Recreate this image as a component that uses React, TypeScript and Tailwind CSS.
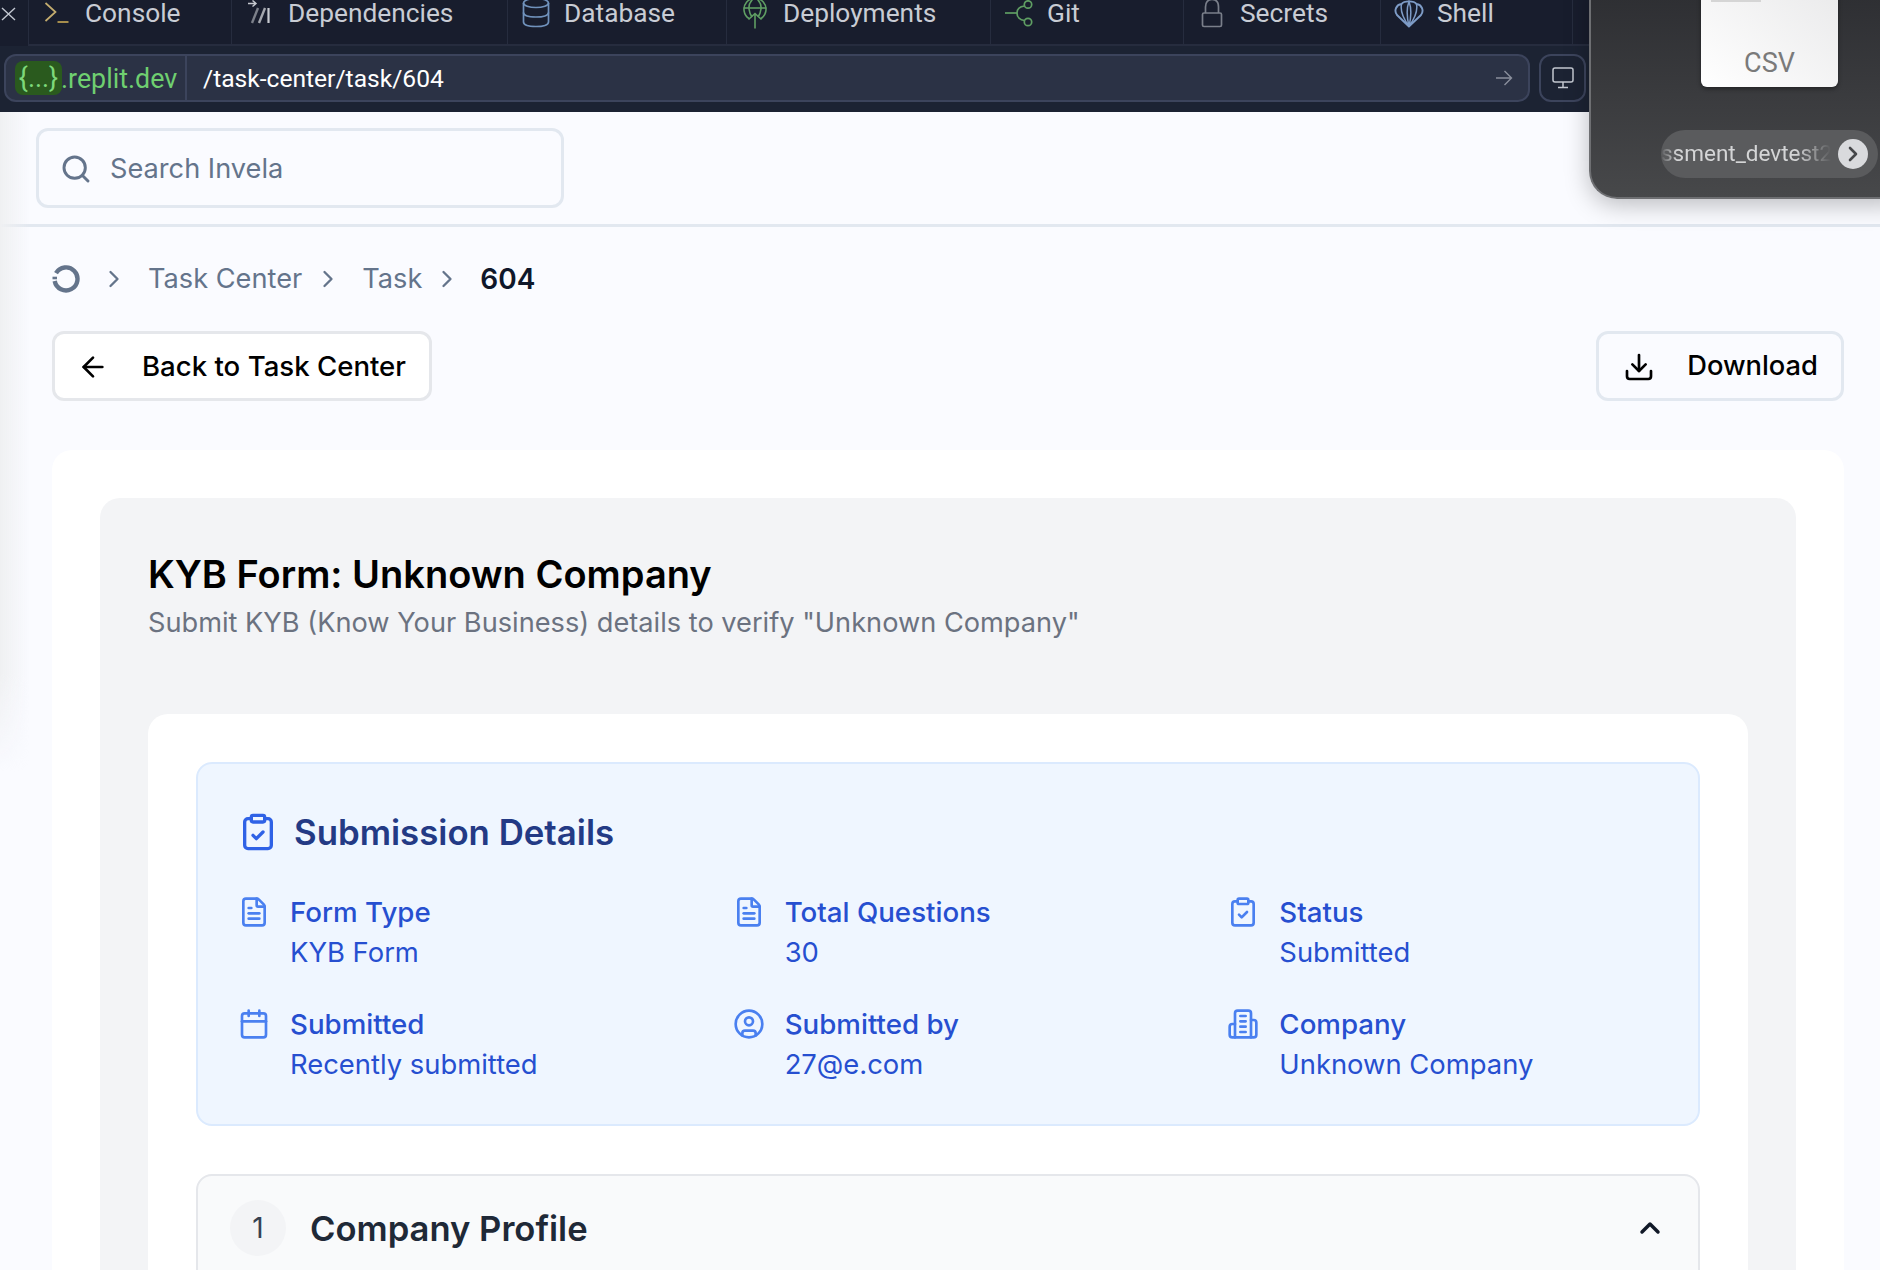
import { ArrowLeft, Calendar, ChevronRight, ChevronUp, CircleUser, ClipboardCheck, Download, FileText, Search } from "lucide-react";
import type { ReactNode } from "react";

const ConsoleIcon = () => (
  <svg width="30" height="44" viewBox="0 0 30 44" fill="none">
    <path d="M3.5 3 13.5 12 3.5 21" stroke="#c4ad6f" strokeWidth="1.7" />
    <path d="M15.5 22H26.5" stroke="#a58d4c" strokeWidth="2" />
  </svg>
);

const DepsIcon = () => (
  <svg width="30" height="44" viewBox="0 0 30 44" fill="none">
    <path d="M3 3.5H10.5M7.5 0.5 11 3.5 7.5 6.5" stroke="#c5c8cf" strokeWidth="1.4" />
    <path d="M7 23 13 8" stroke="#7c808a" strokeWidth="2.4" />
    <path d="M14 23 20 8" stroke="#a4a7ae" strokeWidth="2.4" />
    <path d="M23.5 8V23" stroke="#c8cbd1" strokeWidth="2.2" />
  </svg>
);

const DatabaseIcon = () => (
  <svg width="30" height="44" viewBox="0 0 30 44" fill="none" stroke="#7092bc" strokeWidth="1.7">
    <ellipse cx="15" cy="3" rx="12.5" ry="4.5" />
    <path d="M2.5 3V22C2.5 25 8 26.5 15 26.5S27.5 25 27.5 22V3" />
    <path d="M2.5 12.5C2.5 15.5 8 17 15 17S27.5 15.5 27.5 12.5" />
  </svg>
);

const DeployIcon = () => (
  <svg width="30" height="44" viewBox="0 0 30 44" fill="none" stroke="#5f9e63" strokeWidth="1.6">
    <path d="M9 18.5A11 11 0 1 1 21 18.5" />
    <path d="M3.5 8H26.5" />
    <path d="M15 -3C10 1 8.5 5 9 9 9.5 13 10.5 15 12 17" />
    <path d="M15 -3C20 1 21.5 5 21 9 20.5 13 19.5 15 18 17" />
    <path d="M15 28.5V13.5M8.5 19.5 15 13.5 21.5 19.5" />
  </svg>
);

const GitIcon = () => (
  <svg width="30" height="44" viewBox="0 0 30 44" fill="none" stroke="#5f9e63" strokeWidth="1.7">
    <circle cx="24" cy="4.5" r="3.7" />
    <circle cx="24" cy="22" r="3.7" />
    <path d="M1 13H13" />
    <path d="M20.5 6C16 6.5 13 9 13 13 13 17 16 20 20.5 20.5" />
  </svg>
);

const LockIcon = () => (
  <svg width="30" height="44" viewBox="0 0 30 44" fill="none" stroke="#7a7f8a" strokeWidth="1.7">
    <rect x="5.5" y="13" width="19" height="13.5" rx="1.5" />
    <path d="M8.5 13V7C8.5 2 11 -0.5 15 -0.5S21.5 2 21.5 7V13" />
  </svg>
);

const ShellIcon = () => (
  <svg width="30" height="44" viewBox="0 0 30 44" fill="none" stroke="#7e9cc7" strokeWidth="1.9">
    <path d="M15 26.5 3 15C-0.5 10.5 2.5 4.5 7.5 4 10 0.5 20 0.5 22.5 4 27.5 4.5 30.5 10.5 27 15Z" />
    <path d="M15 26.5C9 18 6 11 7.5 4M15 26.5C21 18 24 11 22.5 4M15 26.5C12.5 16 12.5 8 15 1.5 17.5 8 17.5 16 15 26.5Z" strokeWidth="1.5" />
  </svg>
);

const InvelaLogo = () => (
  <svg width="28" height="28" viewBox="0 0 28 28" fill="none">
    <path d="M4 8.2A11.5 11.5 0 1 1 2.7 16" stroke="#64748b" strokeWidth="4.4" />
    <path d="M0.5 13H5" stroke="#64748b" strokeWidth="2.6" />
  </svg>
);

const CompanyIcon = ({ size, color, className }: { size?: number; color?: string; className?: string }) => (
  <svg width={size} height={size} viewBox="0 0 24 24" fill="none" stroke={color} strokeWidth="2" strokeLinecap="round" strokeLinejoin="round" className={className}>
    <path d="M6 22V4a2 2 0 0 1 2-2h8a2 2 0 0 1 2 2v18Z" />
    <path d="M6 12H4a2 2 0 0 0-2 2v6a2 2 0 0 0 2 2h2" />
    <path d="M18 9h2a2 2 0 0 1 2 2v9a2 2 0 0 1-2 2h-2" />
    <path d="M10 6h4M10 10h4M10 14h4M10 18h4" />
  </svg>
);

const tabs: { label: string; width: string; icon: ReactNode }[] = [
  { label: "Console", width: "w-[203px]", icon: <ConsoleIcon /> },
  { label: "Dependencies", width: "w-[276px]", icon: <DepsIcon /> },
  { label: "Database", width: "w-[219px]", icon: <DatabaseIcon /> },
  { label: "Deployments", width: "w-[264px]", icon: <DeployIcon /> },
  { label: "Git", width: "w-[193px]", icon: <GitIcon /> },
  { label: "Secrets", width: "w-[197px]", icon: <LockIcon /> },
  { label: "Shell", width: "w-[193px]", icon: <ShellIcon /> },
];

const details = [
  { label: "Form Type", value: "KYB Form", Icon: FileText },
  { label: "Total Questions", value: "30", Icon: FileText },
  { label: "Status", value: "Submitted", Icon: ClipboardCheck },
  { label: "Submitted", value: "Recently submitted", Icon: Calendar },
  { label: "Submitted by", value: "27@e.com", Icon: CircleUser },
  { label: "Company", value: "Unknown Company", Icon: CompanyIcon },
];

function TopBar() {
  return (
    <div className="w-[1589px] h-[112px] bg-[#181d2d] font-['Roboto',sans-serif]">
      <div className="flex h-[46px] overflow-hidden">
        <div className="w-[28px] h-[44px] shrink-0">
          <svg width="28" height="44" viewBox="0 0 28 44" fill="none" stroke="#c2c7d0" strokeWidth="1.4">
            <path d="M2 8 15 20M15 8 2 20" />
          </svg>
        </div>
        <div className="flex h-[46px] border-b-2 border-[#262c3e] flex-1">
          {tabs.map((t) => (
            <div key={t.label} className={`${t.width} shrink-0 h-[44px] flex border-l border-[#262c3e] last:border-r`}>
              <div className="w-[56px] flex justify-center">{t.icon}</div>
              <span className="text-[26.3px] leading-[26px] text-[#c8ccd4]">{t.label}</span>
            </div>
          ))}
        </div>
      </div>
      <div className="flex gap-[9px] pl-1 pr-[3px] pt-2 h-[66px] bg-[#1c2333]">
        <div className="flex-1 h-[48px] flex items-center rounded-xl bg-[#2b3245] border-2 border-[#3c445c] pr-[15px]">
          <div className="flex items-center h-full w-[181px] border-r-2 border-[#3c445c] pl-[9px] text-[26.8px] text-[#6fcf70]">
            <span className="flex items-center justify-center w-[47px] h-[34px] rounded-lg bg-[#2a5a1e] text-[#7dd87a]">{"{...}"}</span>
            <span className="pt-[2px] -ml-px">.replit.dev</span>
          </div>
          <span className="flex-1 pl-4 pt-[2px] text-[24.6px] text-white">/task-center/task/604</span>
          <svg width="18" height="16" viewBox="0 0 18 16" fill="none" stroke="#8a8f9c" strokeWidth="1.4">
            <path d="M1 8H16M9.5 1 16.5 8 9.5 15" />
          </svg>
        </div>
        <div className="w-[47px] h-[48px] flex items-center justify-center rounded-xl border-2 border-[#3c445c]">
          <svg width="24" height="22" viewBox="0 0 24 22" fill="none" stroke="#c2c7d0" strokeWidth="1.5">
            <rect x="2" y="1" width="20" height="14" rx="2" />
            <path d="M12 15V20M7 20.5H17" />
          </svg>
        </div>
      </div>
    </div>
  );
}

function QuickLook() {
  return (
    <div className="absolute left-[1589px] -top-5 w-[311px] h-[219px] rounded-bl-[28px] bg-gradient-to-b from-[#2c2d31] to-[#47484a] border-l-2 border-b-2 border-[#6e6f72] shadow-[0_6px_24px_rgba(0,0,0,0.25)] font-['Roboto',sans-serif]">
      <div className="absolute left-[110px] top-0 w-[137px] h-[107px] rounded-b-md bg-gradient-to-tr from-white to-[#e9e9ea] shadow-[0_2px_4px_rgba(0,0,0,0.4)] flex flex-col items-center justify-end pb-[6px]">
        <span className="absolute left-[10px] top-[20px] w-[50px] h-[2px] bg-[#d5d5d5]" />
        <span className="text-[27px] leading-[36px] text-[#7a7a7a]">CSV</span>
      </div>
      <div className="absolute left-[70px] top-[150px] w-[217px] h-[48px] rounded-full bg-[#5a5b5d] flex items-center">
        <span className="w-[175px] overflow-hidden whitespace-nowrap text-[22.5px] text-[#d4d5d6] [mask-image:linear-gradient(to_right,transparent,black_16px,black_135px,transparent_170px)]">
          ssment_devtest27
        </span>
        <span className="ml-[2px] w-[30px] h-[30px] rounded-full bg-[#d9dadd] flex items-center justify-center">
          <ChevronRight size={24} strokeWidth={2.6} color="#46474a" />
        </span>
      </div>
    </div>
  );
}

function DetailItem({ label, value, Icon }: (typeof details)[number]) {
  return (
    <div className="flex gap-5">
      <Icon size={32} color="#4a80f0" className="mt-1 shrink-0" />
      <div className="leading-[40px] text-[#264fd0]">
        <p className="text-[27.7px] font-medium">{label}</p>
        <p className="text-[27.4px]">{value}</p>
      </div>
    </div>
  );
}

export default function App() {
  return (
    <div className="relative h-[1270px] overflow-hidden bg-[#fafbff] font-['Inter',sans-serif]">
      <TopBar />
      <QuickLook />
      <div className="absolute left-0 top-[112px] w-[30px] h-[660px] bg-gradient-to-r from-[#eff0f2] to-transparent [mask-image:linear-gradient(to_bottom,black_85%,transparent)]" />

      <div className="h-[115px] pl-[36px] pt-4 border-b-[3px] border-[#e2e8f0]">
        <div className="w-[528px] h-[80px] flex items-center gap-[18px] pl-[21px] pt-[2px] rounded-xl border-[3px] border-[#e2e8f0]">
          <Search size={32} color="#64748b" strokeWidth={2.2} />
          <span className="text-[27.2px] text-[#64748b]">Search Invela</span>
        </div>
      </div>

      <div className="pl-[52px] pr-[36px] pt-[38px]">
        <nav className="flex items-center h-[28px] text-[27.2px] text-[#64748b]">
          <InvelaLogo />
          <ChevronRight size={28} className="ml-[20px] mr-[20px]" strokeWidth={2} />
          <span>Task Center</span>
          <ChevronRight size={28} className="ml-[12px] mr-[20px]" strokeWidth={2} />
          <span>Task</span>
          <ChevronRight size={28} className="ml-[11px] mr-[19px]" strokeWidth={2} />
          <span className="text-[28px] font-semibold text-[#0f172a]">604</span>
        </nav>

        <div className="flex justify-between mt-[38px]">
          <button className="h-[70px] flex items-center gap-[33px] pl-[22px] pr-[23px] pt-[1px] rounded-xl border-[3px] border-[#e5e7eb] bg-white text-[27.6px] font-medium text-black">
            <ArrowLeft size={32} />
            Back to Task Center
          </button>
          <button className="h-[70px] flex items-center gap-[32px] pl-[24px] pr-[23px] pt-[1px] rounded-xl border-[3px] border-[#e2e8f0] text-[27.3px] font-medium text-black">
            <Download size={32} />
            Download
          </button>
        </div>

        <div className="mt-[49px] p-12 rounded-[20px] bg-white">
          <div className="p-12 rounded-[20px] bg-[#f3f4f6]">
            <h1 className="text-[38px] leading-[56px] font-semibold text-black">KYB Form: Unknown Company</h1>
            <p className="mt-px text-[27.2px] leading-[40px] text-[#6b7280]">Submit KYB (Know Your Business) details to verify "Unknown Company"</p>

            <div className="mt-[71px] p-12 rounded-[20px] bg-white">
              <section className="p-10 rounded-2xl bg-[#eff6ff] border-2 border-[#dbeafe]">
                <div className="flex items-center gap-4 h-[56px]">
                  <ClipboardCheck size={40} color="#2f62e6" />
                  <h2 className="text-[34.8px] font-semibold text-[#233a85]">Submission Details</h2>
                </div>
                <div className="grid grid-cols-3 gap-x-[64px] gap-y-8 mt-8">
                  {details.map((d) => (
                    <DetailItem key={d.label} {...d} />
                  ))}
                </div>
              </section>

              <section className="mt-[48px] h-[400px] rounded-2xl bg-[#f9fafb] border-2 border-[#e5e7eb]">
                <div className="flex items-center gap-6 pl-8 pr-[32px] pt-6">
                  <span className="w-[56px] h-[56px] rounded-full bg-[#f3f4f6] flex items-center justify-center text-[28px] text-[#374151]">1</span>
                  <h3 className="flex-1 pt-[2px] text-[34.6px] font-semibold text-[#1f2937]">Company Profile</h3>
                  <ChevronUp size={32} color="#111827" strokeWidth={2.6} />
                </div>
              </section>
            </div>
          </div>
        </div>
      </div>
    </div>
  );
}
